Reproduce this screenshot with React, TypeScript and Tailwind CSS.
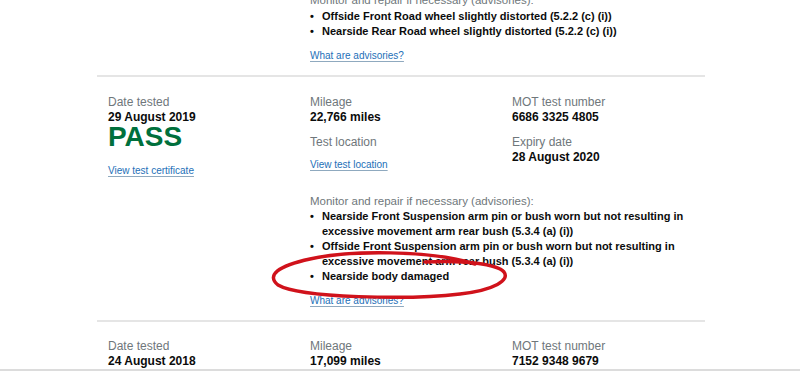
import React from "react";

const font = { fontFamily: '"Liberation Sans", Arial, sans-serif' };

function Label({ children }: { children: React.ReactNode }) {
  return <div className="text-[12px] leading-[15px] text-[#6f777b]">{children}</div>;
}
function Value({ children }: { children: React.ReactNode }) {
  return <div className="text-[12px] leading-[15px] font-bold text-[#0b0c0c]">{children}</div>;
}
function Link({ children }: { children: React.ReactNode }) {
  return (
    <span className="text-[10px] leading-[14px] text-[#1d70b8] underline decoration-[#8fa9bf] underline-offset-[2px]">
      {children}
    </span>
  );
}
function Bullet({ lines }: { lines: string[] }) {
  return (
    <li className="flex text-[11px] leading-[15px] font-bold text-[#0b0c0c]">
      <span className="w-[12px] shrink-0">•</span>
      <div className="flex flex-col whitespace-nowrap">
        {lines.map((l) => (
          <span key={l}>{l}</span>
        ))}
      </div>
    </li>
  );
}

export default function App() {
  return (
    <div style={font} className="relative w-[800px] h-[371px] overflow-hidden bg-white">
      <div className="ml-[97px] w-[608px]">
        {/* previous record tail */}
        <div className="-mt-[7px] pb-[12px] pl-[213px]">
          <div className="text-[11.5px] leading-[15px] text-[#6f777b]">Monitor and repair if necessary (advisories):</div>
          <ul className="mt-[1px]">
            <Bullet lines={["Offside Front Road wheel slightly distorted (5.2.2 (c) (i))"]} />
            <Bullet lines={["Nearside Rear Road wheel slightly distorted (5.2.2 (c) (i))"]} />
          </ul>
          <div className="mt-[8px] leading-[14px]"><Link>What are advisories?</Link></div>
        </div>
        <div className="h-[2px] bg-[#e5e5e5]" />

        {/* 2019 record */}
        <div className="pt-[18px] pb-[12px] pl-[11px]">
          <div className="grid grid-cols-[202px_202px_202px]">
            <div>
              <Label>Date tested</Label>
              <Value>29 August 2019</Value>
              <div className="text-[28px] leading-[24px] font-bold text-[#00703c]">PASS</div>
              <div className="mt-[13px] leading-[14px]"><Link>View test certificate</Link></div>
            </div>
            <div>
              <Label>Mileage</Label>
              <Value>22,766 miles</Value>
              <div className="mt-[10px]"><Label>Test location</Label></div>
              <div className="mt-[6px] leading-[14px]"><Link>View test location</Link></div>
            </div>
            <div>
              <Label>MOT test number</Label>
              <Value>6686 3325 4805</Value>
              <div className="mt-[10px]"><Label>Expiry date</Label></div>
              <Value>28 August 2020</Value>
            </div>
          </div>
          <div className="ml-[202px] mt-[16px]">
            <div className="text-[11.5px] leading-[15px] text-[#6f777b]">Monitor and repair if necessary (advisories):</div>
            <ul>
              <Bullet
                lines={[
                  "Nearside Front Suspension arm pin or bush worn but not resulting in",
                  "excessive movement arm rear bush (5.3.4 (a) (i))",
                ]}
              />
              <Bullet
                lines={[
                  "Offside Front Suspension arm pin or bush worn but not resulting in",
                  "excessive movement arm rear bush (5.3.4 (a) (i))",
                ]}
              />
              <Bullet lines={["Nearside body damaged"]} />
            </ul>
            <div className="mt-[8px] leading-[14px]"><Link>What are advisories?</Link></div>
          </div>
        </div>
        <div className="h-[2px] bg-[#e5e5e5]" />

        {/* 2018 record */}
        <div className="pt-[17px] pl-[11px]">
          <div className="grid grid-cols-[202px_202px_202px]">
            <div>
              <Label>Date tested</Label>
              <Value>24 August 2018</Value>
            </div>
            <div>
              <Label>Mileage</Label>
              <Value>17,099 miles</Value>
            </div>
            <div>
              <Label>MOT test number</Label>
              <Value>7152 9348 9679</Value>
            </div>
          </div>
        </div>
      </div>

      {/* red hand-drawn ellipse */}
      <svg className="absolute left-[260px] top-[242px]" width="260" height="70" viewBox="0 0 260 70">
        <path
          d="M215 22 C 170 8, 90 8, 50 17 C 18 24, 6 33, 18 43 C 40 56, 150 58, 200 52 C 235 48, 250 38, 244 30 C 237 22, 205 18, 165 20"
          fill="none"
          stroke="#d0121b"
          strokeWidth="3.5"
          strokeLinecap="round"
        />
      </svg>

      {/* scrollbar strip */}
      <div className="absolute left-0 bottom-0 w-[800px] h-[2px] bg-[#dcdcdc]" />
    </div>
  );
}
